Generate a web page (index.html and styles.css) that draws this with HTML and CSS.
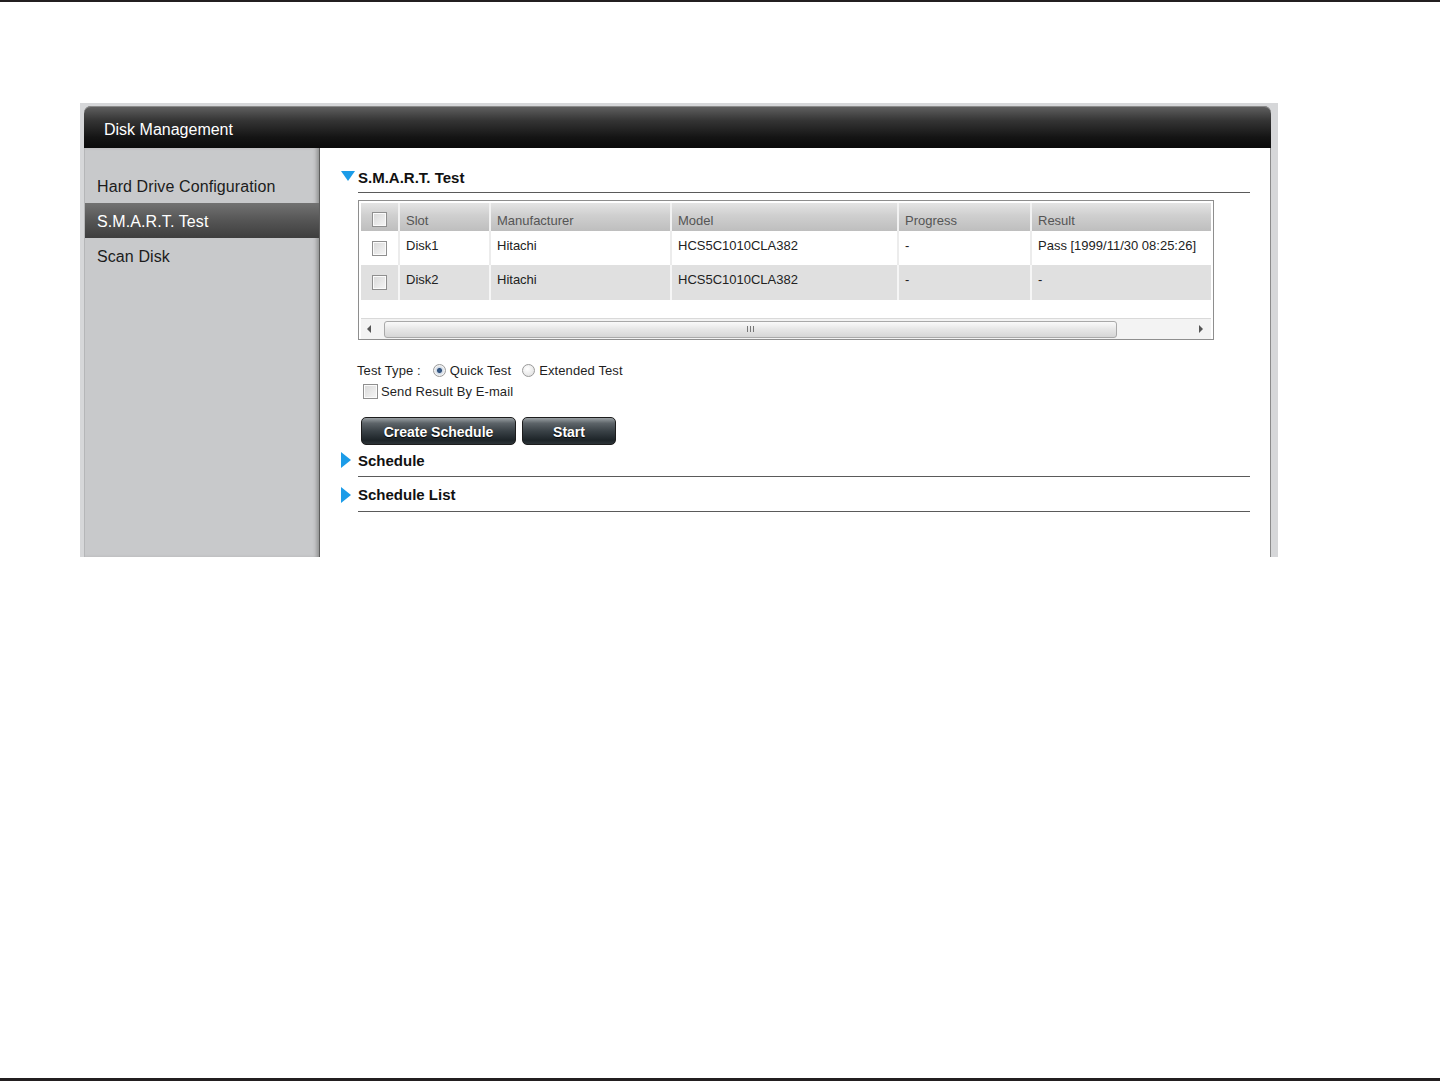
FILE: index.html
```html
<!DOCTYPE html>
<html lang="en">

<head>
    <meta charset="UTF-8">
    <title>Disk Management</title>
    <link rel="stylesheet" href="styles.css">
</head>

<body>
    <div class="rule-top"></div>

    <div class="frame">
        <div class="win-head">Disk Management</div>
        <div class="win-body">
            <ul class="side">
                <li>Hard Drive Configuration</li>
                <li class="on">S.M.A.R.T. Test</li>
                <li>Scan Disk</li>
            </ul>

            <div class="main">
                <div class="sec sec-smart">
                    <div class="arrow"><span class="tri-down"></span></div>
                    <div class="sec-title">S.M.A.R.T. Test</div>
                </div>

                <div class="grid">
                    <div class="row head">
                        <div class="c c0"><span class="chk"></span></div>
                        <div class="c c1">Slot</div>
                        <div class="c c2">Manufacturer</div>
                        <div class="c c3">Model</div>
                        <div class="c c4">Progress</div>
                        <div class="c c5">Result</div>
                    </div>
                    <div class="row">
                        <div class="c c0"><span class="chk"></span></div>
                        <div class="c c1">Disk1</div>
                        <div class="c c2">Hitachi</div>
                        <div class="c c3">HCS5C1010CLA382</div>
                        <div class="c c4">-</div>
                        <div class="c c5">Pass [1999/11/30 08:25:26]</div>
                    </div>
                    <div class="row alt">
                        <div class="c c0"><span class="chk"></span></div>
                        <div class="c c1">Disk2</div>
                        <div class="c c2">Hitachi</div>
                        <div class="c c3">HCS5C1010CLA382</div>
                        <div class="c c4">-</div>
                        <div class="c c5">-</div>
                    </div>
                    <div class="blank"></div>
                    <div class="hscroll">
                        <span class="sarrow left"></span>
                        <div class="thumb"><span class="grip"></span></div>
                        <span class="sarrow right"></span>
                    </div>
                </div>

                <div class="form">
                    <div class="frow">
                        <span>Test Type :</span>
                        <span class="radio checked"></span><span>Quick Test</span>
                        <span class="radio"></span><span>Extended Test</span>
                    </div>
                    <div class="frow mail">
                        <span class="chk"></span><span>Send Result By E-mail</span>
                    </div>
                </div>

                <div class="btns">
                    <div class="btn wide">Create Schedule</div>
                    <div class="btn">Start</div>
                </div>

                <div class="sec sec-sched">
                    <div class="arrow"><span class="tri-right"></span></div>
                    <div class="sec-title">Schedule</div>
                </div>
                <div class="sec sec-list">
                    <div class="arrow"><span class="tri-right"></span></div>
                    <div class="sec-title">Schedule List</div>
                </div>
            </div>
        </div>
    </div>

    <div class="spacer"></div>
    <div class="rule-bottom"></div>
</body>

</html>
```

FILE: styles.css
```css
body {
    margin: 0;
    background: #fff;
    font-family: "Liberation Sans", Arial, sans-serif;
    color: #1a1a1a;
    min-height: 1081px;
    display: flex;
    flex-direction: column;
}

.rule-top {
    height: 2px;
    background: #231f20;
}

.rule-bottom {
    height: 3px;
    background: #231f20;
}

.spacer {
    flex: 1;
}

.frame {
    margin: 101px 0 0 80px;
    width: 1187px;
    height: 451px;
    padding: 3px 7px 0 4px;
    background: #d6d7d9;
    display: flex;
    flex-direction: column;
}

.win-head {
    height: 42px;
    border-radius: 7px 7px 0 0;
    background: linear-gradient(#626262, #343434 35%, #141414 75%, #0b0b0b);
    color: #fff;
    font-size: 16px;
    line-height: 48px;
    padding-left: 20px;
    box-shadow: inset 0 1px 0 #8a8a8a;
}

.win-body {
    flex: 1;
    display: flex;
}

.side {
    list-style: none;
    margin: 0;
    padding: 20px 0 0;
    width: 234px;
    background: #c8c9cb;
    border-left: 1px solid #b5b6b8;
    border-right: 1px solid #5e5e5e;
    box-shadow: inset -4px 0 4px -2px #8c8c8c;
}

.side li {
    height: 35px;
    line-height: 38px;
    padding-left: 12px;
    font-size: 16px;
    letter-spacing: 0.1px;
    color: #1c1c1c;
}

.side li.on {
    background: linear-gradient(#727272, #555 50%, #3e3e3e);
    color: #fff;
}

.main {
    flex: 1;
    background: #fff;
    border-right: 1px solid #8b8b8b;
    padding: 11px 20px 0 21px;
}

/* section headers */
.sec {
    display: flex;
}

.sec-smart {
    height: 34px;
}

.sec-sched {
    height: 32px;
}

.sec-list {
    height: 35px;
}

.arrow {
    width: 17px;
    display: flex;
    align-items: flex-end;
    padding-bottom: 9px;
}

.sec-smart .arrow {
    padding-bottom: 12px;
}

.tri-down {
    width: 0;
    height: 0;
    border-left: 7px solid transparent;
    border-right: 7px solid transparent;
    border-top: 10px solid #1c9ce8;
}

.tri-right {
    width: 0;
    height: 0;
    border-top: 8px solid transparent;
    border-bottom: 8px solid transparent;
    border-left: 10px solid #1c9ce8;
}

.sec-title {
    flex: 1;
    display: flex;
    align-items: flex-end;
    padding-bottom: 7px;
    line-height: 16px;
    font-size: 15px;
    font-weight: bold;
    color: #111;
    border-bottom: 1px solid #5a5a5a;
}

.sec-smart .sec-title {
    padding-bottom: 6px;
}

.sec-list .sec-title {
    padding-bottom: 8px;
}

/* table */
.grid {
    margin: 7px 36px 0 17px;
    border: 1px solid #8e8e8e;
    padding: 2px 2px 0;
    font-size: 13px;
}

.row {
    display: flex;
    height: 34px;
    background: #fff;
    color: #222;
}

.row.alt {
    background: #e0e0e0;
    height: 35px;
}

.row.head {
    height: 28px;
    background: linear-gradient(#e4e4e4, #cfcfcf 45%, #bebebe);
    color: #555;
}

.c {
    padding: 7px 0 0 6px;
    border-left: 2px solid #ececec;
    white-space: nowrap;
}

.row.alt .c {
    border-left-color: #f6f6f6;
}

.head .c {
    padding-top: 10px;
    border-left-color: #f2f2f2;
}

.c0 {
    width: 37px;
    padding: 10px 0 0;
    border-left: 0;
    display: flex;
    justify-content: center;
    box-sizing: border-box;
}

.head .c0 {
    padding-top: 9px;
}

.c1 {
    width: 83px;
}

.c2 {
    width: 173px;
}

.c3 {
    width: 219px;
}

.c4 {
    width: 125px;
}

.c5 {
    flex: 1;
}

.chk {
    display: inline-block;
    width: 13px;
    height: 13px;
    border: 1px solid #8f8f8f;
    background: linear-gradient(135deg, #d8d8d8, #f6f6f6);
    box-shadow: inset 0 0 0 1px #fbfbfb;
}

.blank {
    height: 18px;
}

.hscroll {
    height: 21px;
    display: flex;
    align-items: center;
    background: #f3f3f3;
    border-top: 1px solid #d9d9d9;
    box-sizing: border-box;
    padding: 0 8px 0 6px;
}

.sarrow {
    width: 0;
    height: 0;
    border-top: 4px solid transparent;
    border-bottom: 4px solid transparent;
}

.sarrow.left {
    border-right: 4px solid #555;
    margin-right: 13px;
}

.sarrow.right {
    border-left: 4px solid #555;
    margin-left: auto;
}

.thumb {
    width: 731px;
    height: 15px;
    border: 1px solid #a9a9a9;
    border-radius: 3px;
    background: linear-gradient(#fafafa, #e6e6e6 50%, #d6d6d6);
    display: flex;
    justify-content: center;
    align-items: center;
}

.grip {
    width: 5px;
    height: 6px;
    border-left: 1px solid #777;
    border-right: 1px solid #777;
    position: relative;
}

.grip::after {
    content: "";
    position: absolute;
    left: 2px;
    top: 0;
    width: 1px;
    height: 6px;
    background: #777;
}

/* test options */
.form {
    margin: 21px 0 0 16px;
    font-size: 13px;
    letter-spacing: 0.1px;
    color: #1f1f1f;
}

.frow {
    display: flex;
    align-items: center;
    height: 18px;
}

.frow.mail {
    margin: 3px 0 0 6px;
}

.frow.mail .chk {
    margin-right: 3px;
}

.radio {
    width: 11px;
    height: 11px;
    border-radius: 50%;
    border: 1px solid #9a9a9a;
    background: radial-gradient(circle at 40% 35%, #fff, #dcdcdc);
    margin: 0 4px 0 11px;
    box-sizing: content-box;
}

.radio.checked {
    margin-left: 12px;
    background: radial-gradient(circle, #3b5f8a 0, #2e4f7a 2px, #cfd9e6 3px, #f2f2f2 5px);
}

.btns {
    display: flex;
    gap: 6px;
    margin: 17px 0 0 20px;
}

.btn {
    width: 155px;
    height: 28px;
    box-sizing: border-box;
    border: 1px solid #1d1d1d;
    border-radius: 5px;
    background: linear-gradient(#9aa0a4, #5d6469 20%, #3a4247 50%, #1d2428 85%, #2c3338);
    color: #fff;
    font-size: 14px;
    font-weight: bold;
    text-align: center;
    line-height: 28px;
    text-shadow: 0 1px 1px #000;
}

.btn:not(.wide) {
    width: 94px;
}
```
